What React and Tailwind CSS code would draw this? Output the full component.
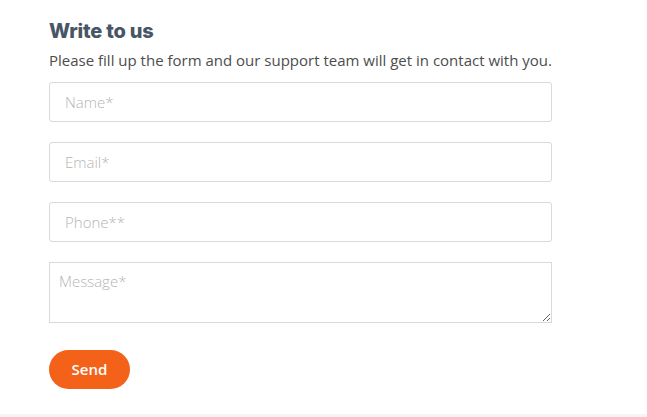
export default function App() {
  const inputCls =
    "block w-full h-[40px] border border-[#d9d9d9] rounded-[3px] bg-white px-[15px] text-[15px] font-light text-[#333] placeholder:text-[#b5b5b5] outline-none";
  return (
    <div className="w-[647px] h-[417px] bg-white flex flex-col" style={{ fontFamily: '"Open Sans", sans-serif' }}>
      <div className="flex-1 pl-[49px] pt-[19px]">
        <div className="w-[503px]">
          <h2
            className="text-[20px] leading-[24px] font-extrabold text-[#475566] tracking-[-0.2px]"
            style={{ fontFamily: 'Inter, sans-serif' }}
          >
            Write to us
          </h2>
          <p className="mt-[6px] text-[15px] leading-[22px] text-[#4d4d4d] whitespace-nowrap">
            Please fill up the form and our support team will get in contact with you.
          </p>
          <form className="mt-[11px] flex flex-col gap-[20px]" onSubmit={(e) => e.preventDefault()}>
            <input className={inputCls} placeholder="Name*" />
            <input className={inputCls} placeholder="Email*" />
            <input className={inputCls} placeholder="Phone**" />
            <textarea
              className="block w-full h-[61px] border border-[#d9d9d9] bg-white px-[9px] py-[7px] text-[15px] leading-[22px] font-light text-[#333] placeholder:text-[#b5b5b5] outline-none"
              placeholder="Message*"
            />
            <div className="pt-[7px]">
              <button
                type="submit"
                className="w-[81px] h-[39px] rounded-full bg-[#f4621a] text-white text-[15px] font-semibold"
              >
                Send
              </button>
            </div>
          </form>
        </div>
      </div>
      <div className="h-[3px] bg-[#f5f5f5]" />
    </div>
  );
}
